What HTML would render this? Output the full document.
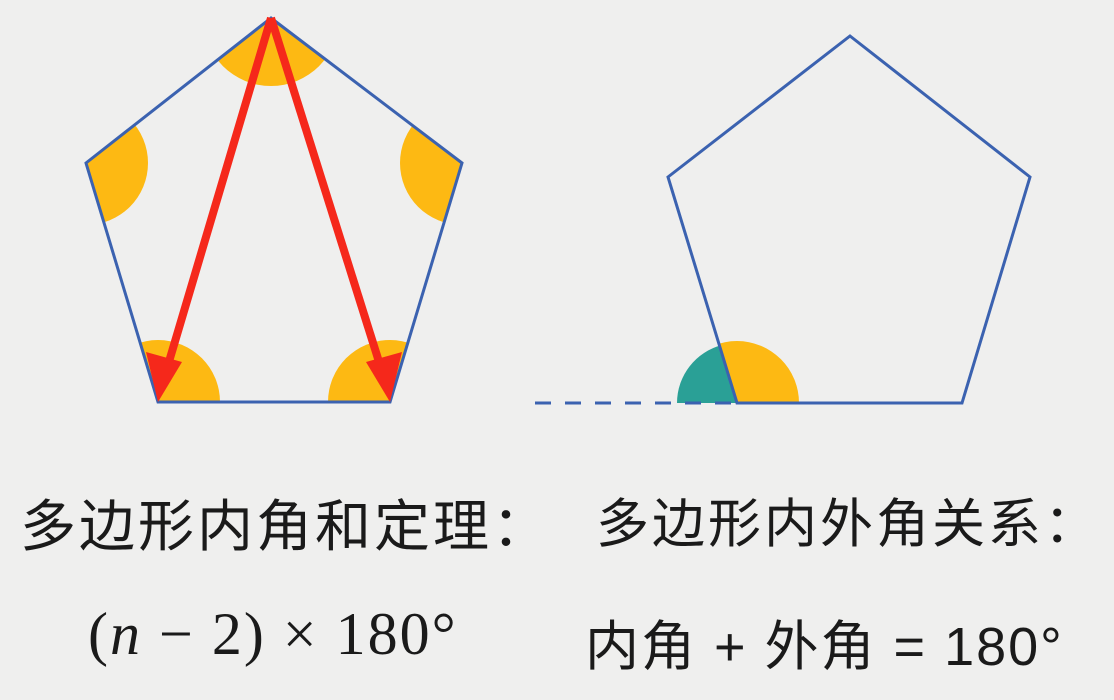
<!DOCTYPE html>
<html><head><meta charset="utf-8"><style>
body{margin:0;width:1114px;height:700px;background:#efefee;overflow:hidden;position:relative}
.t{position:absolute;font-family:"Liberation Sans","Noto Sans CJK SC",sans-serif;color:#1a1a1a;white-space:nowrap}
.m{font-family:"Liberation Serif","Noto Serif CJK SC",serif}
</style></head><body>
<svg width="1114" height="700" style="position:absolute;left:0;top:0">
<defs>
<clipPath id="p1"><polygon points="271,18 462,163 390,402 158,402 86,163"/></clipPath>
<clipPath id="p2"><polygon points="850,36 1030,177 962,403 737,403 668,177"/></clipPath>
</defs>
<g clip-path="url(#p1)" fill="#fdb913">
<circle cx="271" cy="18" r="68"/><circle cx="86" cy="163" r="62"/><circle cx="462" cy="163" r="62"/>
<circle cx="158" cy="402" r="62"/><circle cx="390" cy="402" r="62"/>
</g>
<polygon points="271,18 462,163 390,402 158,402 86,163" fill="none" stroke="#3b62b0" stroke-width="3"/>
<g stroke="#f5281b" stroke-width="8" fill="#f5281b">
<line x1="271" y1="18" x2="168" y2="365"/><line x1="271" y1="18" x2="380" y2="365"/>
</g>
<polygon points="158,402 146,352 182,362" fill="#f5281b"/>
<polygon points="390,402 366,362 402,352" fill="#f5281b"/>
<path d="M737,403 L677,403 A60,60 0 0 1 722,345 Z" fill="#2aa096"/>
<g clip-path="url(#p2)"><circle cx="737" cy="403" r="62" fill="#fdb913"/></g>
<polygon points="850,36 1030,177 962,403 737,403 668,177" fill="none" stroke="#3b62b0" stroke-width="3"/>
<line x1="535" y1="403" x2="737" y2="403" stroke="#3b62b0" stroke-width="3" stroke-dasharray="16,14"/>
</svg>
<div class="t" style="left:20px;top:482px;font-size:56px;letter-spacing:3px">多边形内角和定理：</div>
<div class="t m" style="left:88px;top:600px;font-size:60px;letter-spacing:2px">(<i>n</i> − 2) × 180°</div>
<div class="t" style="left:596px;top:482px;font-size:53px;letter-spacing:3px">多边形内外角关系：</div>
<div class="t" style="left:585px;top:602px;font-size:54px;letter-spacing:2px">内角 + 外角 = 180°</div>
</body></html>
